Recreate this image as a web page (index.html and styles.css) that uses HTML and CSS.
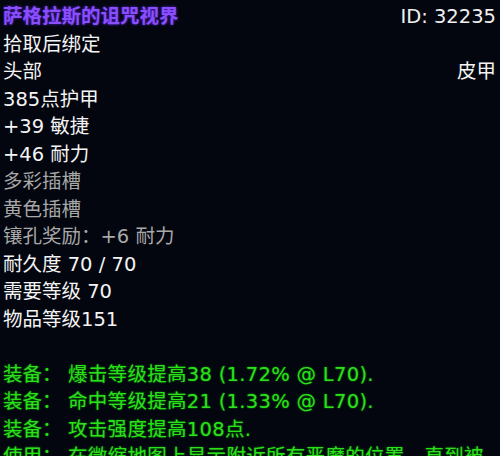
FILE: index.html
```html
<!DOCTYPE html>
<html lang="zh-CN">
<head>
<meta charset="utf-8">
<link rel="stylesheet" href="styles.css">
</head>
<body>
<div class="tooltip">
  <div class="row split"><span class="title">萨格拉斯的诅咒视界</span><span class="id">ID: 32235</span></div>
  <div class="row">拾取后绑定</div>
  <div class="row split"><span>头部</span><span>皮甲</span></div>
  <div class="row">385点护甲</div>
  <div class="row">+39 敏捷</div>
  <div class="row">+46 耐力</div>
  <div class="row grey">多彩插槽</div>
  <div class="row grey">黄色插槽</div>
  <div class="row grey">镶孔奖励：+6 耐力</div>
  <div class="row">耐久度 70 / 70</div>
  <div class="row">需要等级 70</div>
  <div class="row">物品等级151</div>
  <div class="row blank"></div>
  <div class="row green"><span class="label">装备：</span><span class="fx">爆击等级提高38 (1.72% @ L70).</span></div>
  <div class="row green"><span class="label">装备：</span><span class="fx">命中等级提高21 (1.33% @ L70).</span></div>
  <div class="row green"><span class="label">装备：</span><span class="fx">攻击强度提高108点.</span></div>
  <div class="row green"><span class="label">使用：</span><span class="fx">在微缩地图上显示附近所有恶魔的位置，直到被</span></div>
</div>
</body>
</html>
```
FILE: styles.css
```css
html, body {
  margin: 0;
  padding: 0;
  background: #03060f;
}
body {
  width: 500px;
  height: 456px;
  overflow: hidden;
}
.tooltip {
  padding: 3px 4px 0 3px;
  font-family: "DejaVu Sans", "Noto Sans CJK SC", sans-serif;
  font-size: 19.5px;
  color: #f4f4f4;
}
.row {
  height: 27.5px;
  line-height: 27.5px;
  white-space: nowrap;
  overflow: hidden;
}
.split {
  display: flex;
  justify-content: space-between;
}
.title {
  color: #8a4dff;
  font-weight: bold;
  text-shadow: 0 0 3px #5a2ad0;
}
.id {
  color: #f0f0f0;
}
.grey {
  color: #a8a8a8;
}
.green {
  color: #2be01a;
  text-shadow: 0 0 2px #0d8a05;
  overflow: visible;
}
.label {
  display: inline-block;
  width: 65px;
}
.fx {
  letter-spacing: 0.3px;
}
```
